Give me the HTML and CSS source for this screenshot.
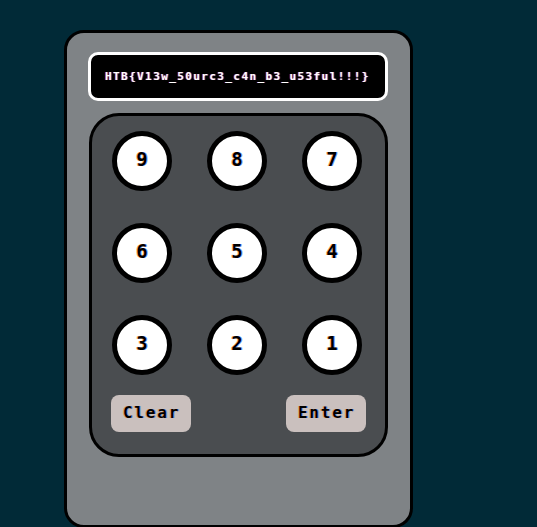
FILE: index.html
```html
<!DOCTYPE html>
<html>
<head>
<meta charset="utf-8">
<link rel="stylesheet" href="styles.css">
</head>
<body>
<div class="device">
  <div class="display"><span class="flag">HTB{V13w_50urc3_c4n_b3_u53ful!!!}</span></div>
  <div class="keypad">
    <div class="keys">
      <button class="key">9</button>
      <button class="key">8</button>
      <button class="key">7</button>
      <button class="key">6</button>
      <button class="key">5</button>
      <button class="key">4</button>
      <button class="key">3</button>
      <button class="key">2</button>
      <button class="key">1</button>
    </div>
    <div class="actions">
      <button class="action">Clear</button>
      <button class="action">Enter</button>
    </div>
  </div>
</div>
</body>
</html>
```
FILE: styles.css
```css
html, body {
  margin: 0;
  padding: 0;
  background: #012a37;
  height: 100%;
  overflow: hidden;
}
body {
  padding: 30px 0 0 64px;
  box-sizing: border-box;
}
.device {
  width: 349px;
  height: 498px;
  box-sizing: border-box;
  background: #7f8386;
  border: 3px solid #000;
  border-radius: 20px;
  padding: 19px 22px 0 22px;
  display: flex;
  flex-direction: column;
  gap: 12px;
}
.display {
  height: 49px;
  box-sizing: border-box;
  background: #000;
  border: 3px solid #fff;
  border-radius: 10px;
  display: flex;
  align-items: center;
  padding-left: 14px;
  margin-left: -1px;
}
.flag {
  font-family: "DejaVu Sans Mono", "Liberation Mono", monospace;
  font-weight: bold;
  font-size: 11px;
  letter-spacing: 1.4px;
  color: #fff;
  text-shadow: -1px 0 rgba(255, 40, 40, 0.55), 1px 0 rgba(60, 90, 255, 0.55);
}
.keypad {
  height: 344px;
  box-sizing: border-box;
  background: #4a4d50;
  border: 3px solid #000;
  border-radius: 30px;
  padding: 15px 19px 21px 19px;
  display: flex;
  flex-direction: column;
  gap: 20px;
}
.keys {
  display: grid;
  grid-template-columns: repeat(3, 60px);
  column-gap: 35px;
  row-gap: 32px;
  padding-left: 1px;
}
.key {
  width: 60px;
  height: 60px;
  box-sizing: border-box;
  border: 5px solid #000;
  border-radius: 50%;
  background: #fff;
  padding: 0 0 4px 0;
  font-family: "DejaVu Sans Mono", "Liberation Mono", monospace;
  font-weight: bold;
  font-size: 19px;
  color: #000;
  text-shadow: -1px 0 rgba(255, 120, 0, 0.6), 1px 0 rgba(40, 110, 255, 0.6);
}
.actions {
  display: flex;
  justify-content: space-between;
}
.action {
  width: 80px;
  height: 37px;
  border: none;
  border-radius: 8px;
  background: #cac0be;
  padding: 0 0 2px 1px;
  font-family: "DejaVu Sans Mono", "Liberation Mono", monospace;
  font-weight: bold;
  font-size: 16px;
  letter-spacing: 1.8px;
  color: #000;
  text-shadow: -1px 0 rgba(255, 120, 0, 0.5), 1px 0 rgba(40, 110, 255, 0.5);
}
```
